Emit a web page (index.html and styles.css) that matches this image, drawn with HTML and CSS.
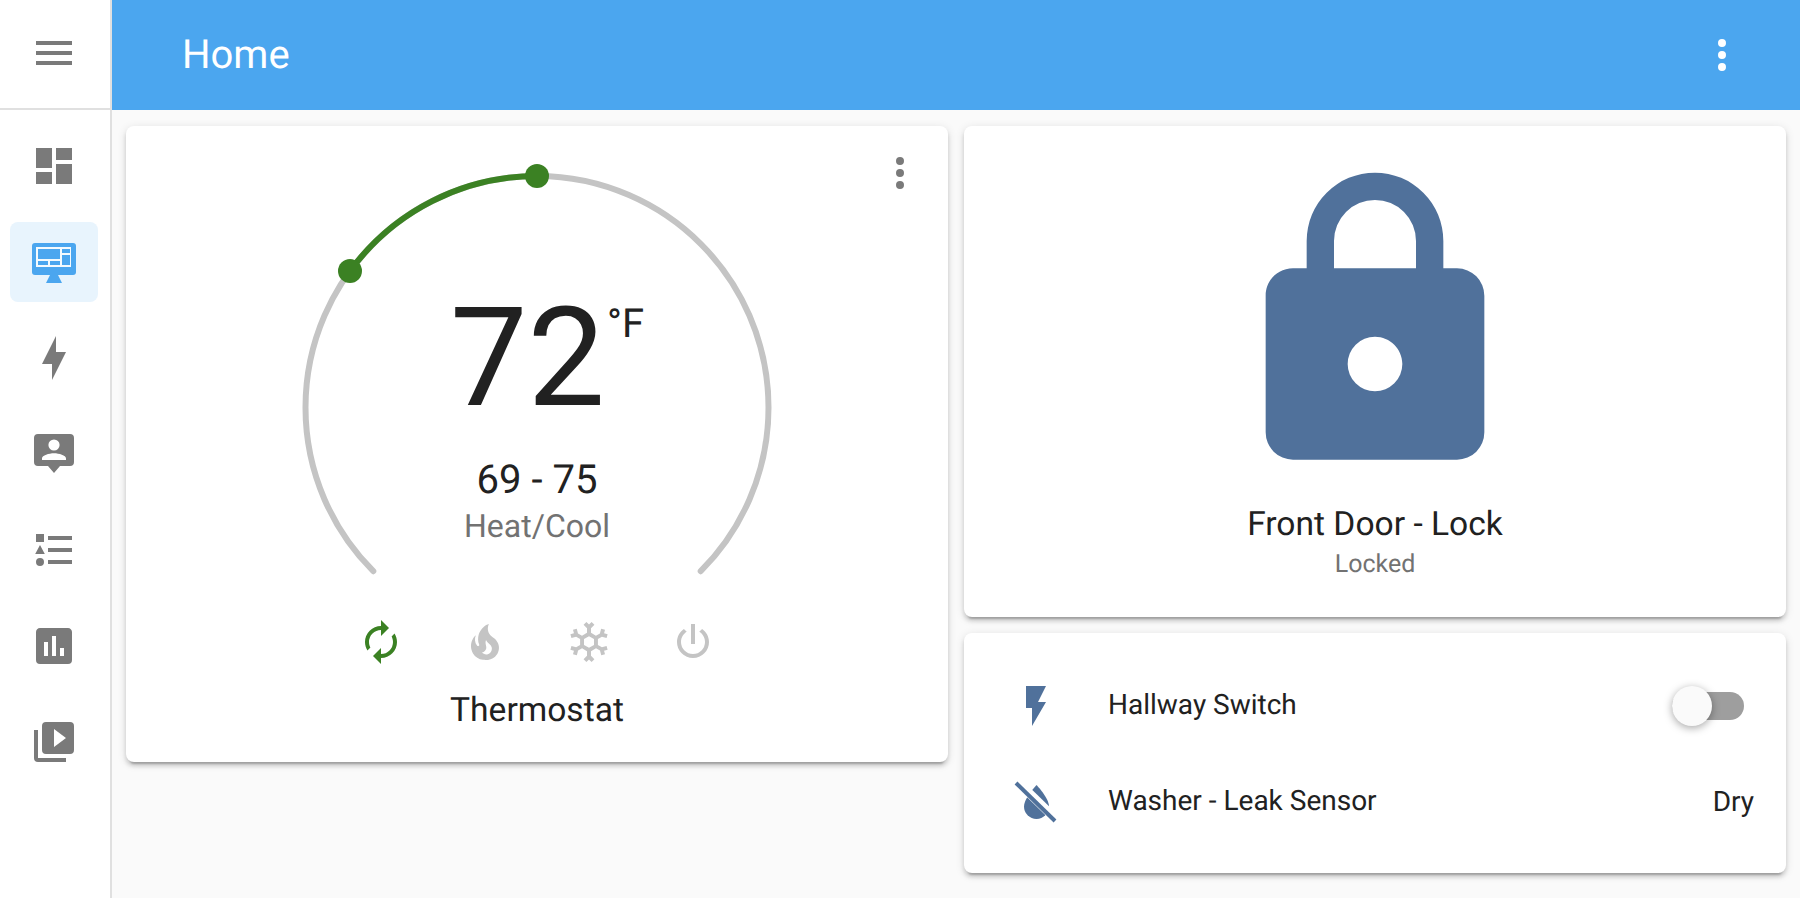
FILE: index.html
```html
<!DOCTYPE html>
<html lang="en">
<head>
  <meta charset="UTF-8">
  <title>Home</title>
  <link rel="stylesheet" href="styles.css">
</head>
<body>
  <div class="app">
    <aside class="sidebar">
      <div class="sidebar-top">
        <svg class="icon" viewBox="0 0 24 24"><path d="M3,6H21V8H3V6M3,11H21V13H3V11M3,16H21V18H3V16Z"/></svg>
      </div>
      <nav class="nav">
        <a class="nav-item"><svg class="icon" viewBox="0 0 24 24"><path d="M13,3V9H21V3M13,21H21V11H13M3,21H11V15H3M3,13H11V3H3V13Z"/></svg></a>
        <a class="nav-item active">
          <svg class="icon" viewBox="0 0 48 48">
            <rect x="2" y="5" width="44" height="32" rx="3"/>
            <path d="M20 37h8l4 8H16z"/>
            <rect class="cut" x="6" y="9" width="35" height="20"/>
            <rect x="8" y="11" width="22" height="10"/>
            <rect x="32" y="11" width="8" height="4"/>
            <rect x="32" y="17" width="8" height="10"/>
            <rect x="8" y="23" width="10" height="4"/>
            <rect x="20" y="23" width="10" height="4"/>
          </svg>
        </a>
        <a class="nav-item"><svg class="icon" viewBox="0 0 24 24"><path d="M11 15H6L13 1V9H18L11 23V15Z"/></svg></a>
        <a class="nav-item"><svg class="icon" viewBox="0 0 24 24"><path fill-rule="evenodd" d="M4 2H20A2 2 0 0 1 22 4V16A2 2 0 0 1 20 18H15L12 21.5L9 18H4A2 2 0 0 1 2 16V4A2 2 0 0 1 4 2ZM12 4.7A2.8 2.8 0 1 0 12 10.3A2.8 2.8 0 1 0 12 4.7ZM6 15H18V14.2C18 12.7 14.5 11.6 12 11.6C9.5 11.6 6 12.7 6 14.2Z"/></svg></a>
        <a class="nav-item"><svg class="icon" viewBox="0 0 24 24"><path d="M3 4H7V8H3ZM9 5H21V7H9ZM5 9.5L7.4 14H2.6ZM9 11H21V13H9ZM5 16A2 2 0 1 1 5 20A2 2 0 1 1 5 16ZM9 17H21V19H9Z"/></svg></a>
        <a class="nav-item"><svg class="icon" viewBox="0 0 24 24"><path d="M19,3H5C3.89,3 3,3.89 3,5V19A2,2 0 0,0 5,21H19A2,2 0 0,0 21,19V5C21,3.89 20.1,3 19,3M9,17H7V10H9V17M13,17H11V7H13V17M17,17H15V13H17V17Z"/></svg></a>
        <a class="nav-item"><svg class="icon" viewBox="0 0 24 24"><path d="M4,6H2V20A2,2 0 0,0 4,22H18V20H4V6M20,2H8A2,2 0 0,0 6,4V16A2,2 0 0,0 8,18H20A2,2 0 0,0 22,16V4A2,2 0 0,0 20,2M12,14.5V5.5L18,10L12,14.5Z"/></svg></a>
      </nav>
    </aside>

    <main class="main">
      <header class="topbar">
        <h1 class="title">Home</h1>
        <svg class="icon" viewBox="0 0 24 24"><path d="M12,16A2,2 0 0,1 14,18A2,2 0 0,1 12,20A2,2 0 0,1 10,18A2,2 0 0,1 12,16M12,10A2,2 0 0,1 14,12A2,2 0 0,1 12,14A2,2 0 0,1 10,12A2,2 0 0,1 12,10M12,4A2,2 0 0,1 14,6A2,2 0 0,1 12,8A2,2 0 0,1 10,6A2,2 0 0,1 12,4Z"/></svg>
      </header>

      <div class="content">
        <section class="card thermostat">
          <svg class="icon kebab" viewBox="0 0 24 24"><path d="M12,16A2,2 0 0,1 14,18A2,2 0 0,1 12,20A2,2 0 0,1 10,18A2,2 0 0,1 12,16M12,10A2,2 0 0,1 14,12A2,2 0 0,1 12,14A2,2 0 0,1 10,12A2,2 0 0,1 12,10M12,4A2,2 0 0,1 14,6A2,2 0 0,1 12,8A2,2 0 0,1 10,6A2,2 0 0,1 12,4Z"/></svg>
          <div class="dial">
            <svg class="dial-ring" viewBox="0 0 480 420">
              <path class="ring-track" d="M76.3 405.2A231.5 231.5 0 1 1 403.7 405.2"/>
              <path class="ring-range" d="M53 105A231.5 231.5 0 0 1 240 10"/>
              <circle class="ring-handle" cx="53" cy="105" r="12"/>
              <circle class="ring-handle" cx="240" cy="10" r="12"/>
            </svg>
            <div class="dial-text">
              <div class="temp"><span class="temp-value">72</span><span class="temp-unit">°F</span></div>
              <div class="range">69 - 75</div>
              <div class="mode">Heat/Cool</div>
            </div>
          </div>
          <div class="modes">
            <svg class="icon mode-on" viewBox="0 0 24 24"><path d="M12,6V9L16,5L12,1V4A8,8 0 0,0 4,12C4,13.57 4.46,15.03 5.24,16.26L6.7,14.8C6.25,13.97 6,13 6,12A6,6 0 0,1 12,6M18.76,7.74L17.3,9.2C17.74,10.04 18,11 18,12A6,6 0 0,1 12,18V15L8,19L12,23V20A8,8 0 0,0 20,12C20,10.43 19.54,8.97 18.76,7.74Z"/></svg>
            <svg class="icon mode-off" viewBox="0 0 24 24"><path d="M17.66 11.2C17.43 10.9 17.15 10.64 16.89 10.38C16.22 9.78 15.46 9.35 14.82 8.72C13.33 7.26 13 4.85 13.95 3C13 3.23 12.17 3.75 11.46 4.32C8.87 6.4 7.85 10.07 9.07 13.22C9.11 13.32 9.15 13.42 9.15 13.55C9.15 13.77 9 13.97 8.8 14.05C8.57 14.15 8.33 14.09 8.14 13.93C8.08 13.88 8.04 13.83 8 13.76C6.87 12.33 6.69 10.28 7.45 8.64C5.78 10 4.87 12.3 5 14.47C5.06 14.97 5.12 15.47 5.29 15.97C5.43 16.57 5.7 17.17 6 17.7C7.08 19.43 8.95 20.67 10.96 20.92C13.1 21.19 15.39 20.8 17.03 19.32C18.86 17.66 19.5 15 18.56 12.72L18.43 12.46C18.28 12.13 17.66 11.2 17.66 11.2M14.5 17.5C14.22 17.74 13.76 18 13.4 18.1C12.28 18.5 11.16 17.94 10.5 17.28C11.69 17 12.4 16.12 12.61 15.23C12.78 14.43 12.46 13.77 12.33 13C12.21 12.26 12.23 11.63 12.5 10.94C12.69 11.32 12.89 11.7 13.13 12C13.9 13 15.11 13.44 15.37 14.8C15.41 14.94 15.43 15.08 15.43 15.23C15.46 16.05 15.1 16.95 14.5 17.5H14.5Z"/></svg>
            <svg class="icon mode-off" viewBox="0 0 24 24"><path d="M20.79,13.95L18.46,14.57L16.46,13.44V10.56L18.46,9.43L20.79,10.05L21.31,8.12L19.54,7.65L20,5.88L18.07,5.36L17.45,7.69L15.45,8.82L13,7.38V5.12L14.71,3.41L13.29,2L12,3.29L10.71,2L9.29,3.41L11,5.12V7.38L8.5,8.82L6.5,7.69L5.88,5.36L4,5.88L4.47,7.65L2.7,8.12L3.22,10.05L5.55,9.43L7.55,10.56V13.45L5.55,14.58L3.22,13.96L2.7,15.89L4.47,16.36L4,18.12L5.93,18.64L6.55,16.31L8.55,15.18L11,16.62V18.88L9.29,20.59L10.71,22L12,20.71L13.29,22L14.7,20.59L13,18.88V16.62L15.5,15.17L17.5,16.3L18.12,18.63L20,18.12L19.53,16.35L21.3,15.88L20.79,13.95M9.5,10.56L12,9.11L14.5,10.56V13.44L12,14.89L9.5,13.44V10.56Z"/></svg>
            <svg class="icon mode-off" viewBox="0 0 24 24"><path d="M16.56,5.44L15.11,6.89C16.84,7.94 18,9.83 18,12A6,6 0 0,1 12,18A6,6 0 0,1 6,12C6,9.83 7.16,7.94 8.88,6.88L7.44,5.44C5.36,6.88 4,9.28 4,12A8,8 0 0,0 12,20A8,8 0 0,0 20,12C20,9.28 18.64,6.88 16.56,5.44M13,3H11V13H13"/></svg>
          </div>
          <div class="card-name">Thermostat</div>
        </section>

        <div class="right-col">
          <section class="card lock">
            <svg class="lock-icon" viewBox="0 0 24 24"><path d="M12,17A2,2 0 0,0 14,15C14,13.89 13.1,13 12,13A2,2 0 0,0 10,15A2,2 0 0,0 12,17M18,8A2,2 0 0,1 20,10V20A2,2 0 0,1 18,22H6A2,2 0 0,1 4,20V10C4,8.89 4.89,8 6,8H7V6A5,5 0 0,1 12,1A5,5 0 0,1 17,6V8H18M12,3A3,3 0 0,0 9,6V8H15V6A3,3 0 0,0 12,3Z"/></svg>
            <div class="lock-name">Front Door - Lock</div>
            <div class="lock-state">Locked</div>
          </section>

          <section class="card entities">
            <div class="row">
              <svg class="icon state-icon" viewBox="0 0 24 24"><path d="M7,2V13H10V22L17,10H13L17,2H7Z"/></svg>
              <span class="row-name">Hallway Switch</span>
              <span class="switch"><span class="switch-thumb"></span></span>
            </div>
            <div class="row">
              <svg class="icon state-icon" viewBox="0 0 48 48">
                <path d="M24.5 7C24.5 7 37 20 37 28.5A12.5 12.5 0 0 1 12 28.5C12 22 19 13 24.5 7Z"/>
                <path class="slash-gap" d="M5.4 3.6L44.4 41.6"/>
                <path class="slash" d="M4 5L43 43"/>
              </svg>
              <span class="row-name">Washer - Leak Sensor</span>
              <span class="row-value">Dry</span>
            </div>
          </section>
        </div>
      </div>
    </main>
  </div>
</body>
</html>
```

FILE: styles.css
```css
:root {
  --primary: #4ba6ef;
  --icon-gray: #7a7a7a;
  --state-blue: #50719b;
  --text: #212121;
  --text-muted: #727272;
  --divider: #e0e0e0;
}
* {
  box-sizing: border-box;
}
body {
  margin: 0;
  background: #fafafa;
  color: var(--text);
  font-family: Roboto, sans-serif;
  text-rendering: geometricPrecision;
}
.icon {
  display: block;
  width: 48px;
  height: 48px;
  fill: var(--icon-gray);
  flex: none;
}
.app {
  display: flex;
  height: 898px;
  overflow: hidden;
}

/* sidebar */
.sidebar {
  width: 112px;
  flex: none;
  background: #fff;
  border-right: 2px solid var(--divider);
}
.sidebar-top {
  height: 110px;
  padding: 29px 30px 0;
  border-bottom: 2px solid var(--divider);
}
.nav {
  display: flex;
  flex-direction: column;
  gap: 16px;
  padding: 16px 12px 0 10px;
}
.nav-item {
  display: flex;
  align-items: center;
  justify-content: center;
  height: 80px;
  border-radius: 8px;
}
.nav-item.active {
  background: #e8f4fd;
}
.nav-item.active .icon {
  fill: var(--primary);
}
.nav-item.active .cut {
  fill: #f4fafe;
}

/* top bar */
.main {
  flex: 1;
  min-width: 0;
}
.topbar {
  display: flex;
  align-items: center;
  justify-content: space-between;
  height: 110px;
  padding: 0 54px 0 70px;
  background: var(--primary);
}
.topbar .icon {
  fill: #fff;
}
.title {
  margin: 0 0 2px;
  font-size: 40px;
  font-weight: 400;
  color: #fff;
}

/* cards */
.content {
  display: grid;
  grid-template-columns: 822px 822px;
  gap: 16px;
  align-items: start;
  padding: 16px 14px;
}
.right-col {
  display: flex;
  flex-direction: column;
  gap: 16px;
}
.card {
  position: relative;
  background: #fff;
  border-radius: 8px;
  box-shadow: 0 4px 4px rgba(0, 0, 0, 0.14), 0 2px 10px rgba(0, 0, 0, 0.12), 0 6px 2px -4px rgba(0, 0, 0, 0.2);
}

/* thermostat */
.thermostat {
  height: 636px;
  padding-top: 40px;
}
.kebab {
  position: absolute;
  top: 23px;
  right: 24px;
}
.dial {
  position: relative;
  width: 480px;
  height: 420px;
  margin: 0 auto;
}
.dial-ring {
  display: block;
  width: 480px;
  height: 420px;
  overflow: visible;
}
.ring-track,
.ring-range {
  fill: none;
  stroke-width: 6;
  stroke-linecap: round;
}
.ring-track {
  stroke: #c4c4c4;
}
.ring-range {
  stroke: #3b8123;
}
.ring-handle {
  fill: #3b8123;
}
.dial-text {
  position: absolute;
  top: 129px;
  left: 0;
  right: 0;
  text-align: center;
}
.temp {
  display: flex;
  justify-content: center;
  padding-left: 20px;
  height: 120px;
}
.temp-value {
  font-size: 138px;
  font-weight: 400;
  line-height: 126px;
}
.temp-unit {
  font-size: 40px;
  line-height: 40px;
  margin: 9px 0 0 2px;
}
.range {
  margin-top: 43px;
  font-size: 40px;
  line-height: 44px;
}
.mode {
  margin-top: 2px;
  font-size: 32px;
  line-height: 44px;
  color: var(--text-muted);
}
.modes {
  display: flex;
  justify-content: center;
  gap: 56px;
  margin-top: 32px;
}
.mode-on {
  fill: #3b8123;
}
.mode-off {
  fill: #c4c4c4;
}
.card-name {
  margin-top: 23px;
  text-align: center;
  font-size: 33.6px;
  line-height: 44px;
}

/* lock */
.lock {
  height: 491px;
  padding-top: 33px;
  text-align: center;
}
.lock-icon {
  display: block;
  width: 328px;
  height: 328px;
  margin: 0 auto;
  fill: var(--state-blue);
}
.lock-name {
  margin-top: 16px;
  font-size: 33.6px;
  line-height: 44px;
}
.lock-state {
  font-size: 25px;
  line-height: 36px;
  color: var(--text-muted);
}

/* entities */
.entities {
  display: flex;
  flex-direction: column;
  gap: 16px;
  height: 240px;
  padding: 33px 32px 0 48px;
}
.row {
  display: flex;
  align-items: center;
  height: 80px;
}
.state-icon {
  fill: var(--state-blue);
}
.row-name {
  flex: 1;
  margin: 0 0 3px 48px;
  font-size: 28px;
}
.row-value {
  margin-bottom: 2px;
  font-size: 28px;
}
.slash-gap,
.slash {
  fill: none;
}
.slash-gap {
  stroke: #fff;
  stroke-width: 9;
}
.slash {
  stroke: var(--state-blue);
  stroke-width: 4;
}
.switch {
  position: relative;
  width: 72px;
  height: 28px;
  margin-right: 10px;
  border-radius: 14px;
  background: #9e9e9e;
}
.switch-thumb {
  position: absolute;
  top: -6px;
  left: 0;
  width: 40px;
  height: 40px;
  border-radius: 50%;
  background: #fafafa;
  box-shadow: 0 2px 8px rgba(0, 0, 0, 0.35);
}
```
